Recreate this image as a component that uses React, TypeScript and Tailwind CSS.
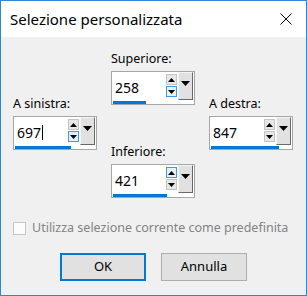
import React from 'react';

const Tri = ({ up, w, h }: { up?: boolean; w: number; h: number }) => (
  <svg width={w} height={h} viewBox={`0 0 ${w} ${h}`} className="block">
    <path d={up ? `M0 ${h}L${w / 2} 0L${w} ${h}Z` : `M0 0L${w} 0L${w / 2} ${h}Z`} fill="#000" />
  </svg>
);

const SpinBtn = ({ up, hot }: { up?: boolean; hot?: boolean }) => (
  <div
    className={
      'h-[11px] w-[11px] border flex items-center justify-center ' +
      (hot ? 'bg-[#e5f1fb] border-[#3c9ae6]' : 'bg-[#e8e8e8] border-[#c4c4c4]')
    }
  >
    <Tri up={up} w={7} h={4} />
  </div>
);

interface SpinProps {
  label: string;
  value: string;
  bar: number;
  hot?: 'up' | 'down';
  caret?: boolean;
}

const SpinBox = ({ label, value, bar, hot, caret }: SpinProps) => (
  <div className="flex flex-col w-[84px]">
    <div className="text-[12.5px] leading-4 text-black mb-[4px]">{label}</div>
    <div className="h-[34px] bg-white border border-[#a6a6a6] flex flex-col">
      <div className="flex h-[28px]">
        <div className="flex-1 flex items-center pl-[3px] pt-[2px] text-[14px] text-black">
          {value}
          {caret && <span className="w-px h-[15px] bg-black ml-px" />}
        </div>
        <div className="flex flex-col gap-px pt-[2px] w-[11px]">
          <SpinBtn up hot={hot === 'up'} />
          <SpinBtn hot={hot === 'down'} />
        </div>
        <div className="w-[15px] ml-px mr-px bg-[#e1e1e1] border border-t-[#f4f4f4] border-l-[#f4f4f4] border-r-[#696969] border-b-[#696969] flex justify-center pt-[8px]">
          <Tri w={9} h={5} />
        </div>
      </div>
      <div className="flex-1 flex items-center pl-px">
        <div className="h-[3px] bg-[#0078d7]" style={{ width: bar }} />
      </div>
    </div>
  </div>
);

export default function App() {
  return (
    <div
      className="w-[307px] h-[296px] border border-[#2b88d8] flex flex-col bg-[#f0f0f0]"
      style={{ fontFamily: '"Noto Sans", "Open Sans", sans-serif' }}
    >
      <div className="h-[36px] bg-white flex items-center justify-between pl-[9px] pr-[14px]">
        <span className="text-[15px] text-black">Selezione personalizzata</span>
        <svg width="12" height="12" viewBox="0 0 12 12">
          <path d="M0.5 0.5L11.5 11.5M11.5 0.5L0.5 11.5" stroke="#000" strokeWidth="1" />
        </svg>
      </div>

      <div className="flex-1 flex flex-col">
        <div className="flex px-[12px] gap-[14px] items-start">
          <div className="pt-[59px]">
            <SpinBox label="A sinistra:" value="697" bar={56} hot="down" caret />
          </div>
          <div className="pt-[14px] flex flex-col gap-[39px]">
            <SpinBox label="Superiore:" value="258" bar={33} hot="down" />
            <SpinBox label="Inferiore:" value="421" bar={54} hot="up" />
          </div>
          <div className="pt-[59px]">
            <SpinBox label="A destra:" value="847" bar={68} />
          </div>
        </div>

        <div className="flex items-center h-4 mt-[22px] pl-[12px]">
          <div className="w-[13px] h-[13px] border border-[#c6c6c6] bg-[#fcfcfc]" />
          <span className="ml-[6px] text-[12.5px] text-[#838383]">Utilizza selezione corrente come predefinita</span>
        </div>

        <div className="flex justify-center gap-[15px] mt-[17px]">
          <button className="w-[86px] h-[28px] bg-[#e1e1e1] border-2 border-[#0078d7] text-[13px] text-black">OK</button>
          <button className="w-[86px] h-[28px] bg-[#e1e1e1] border border-[#adadad] text-[13px] text-black">Annulla</button>
        </div>
      </div>
    </div>
  );
}
